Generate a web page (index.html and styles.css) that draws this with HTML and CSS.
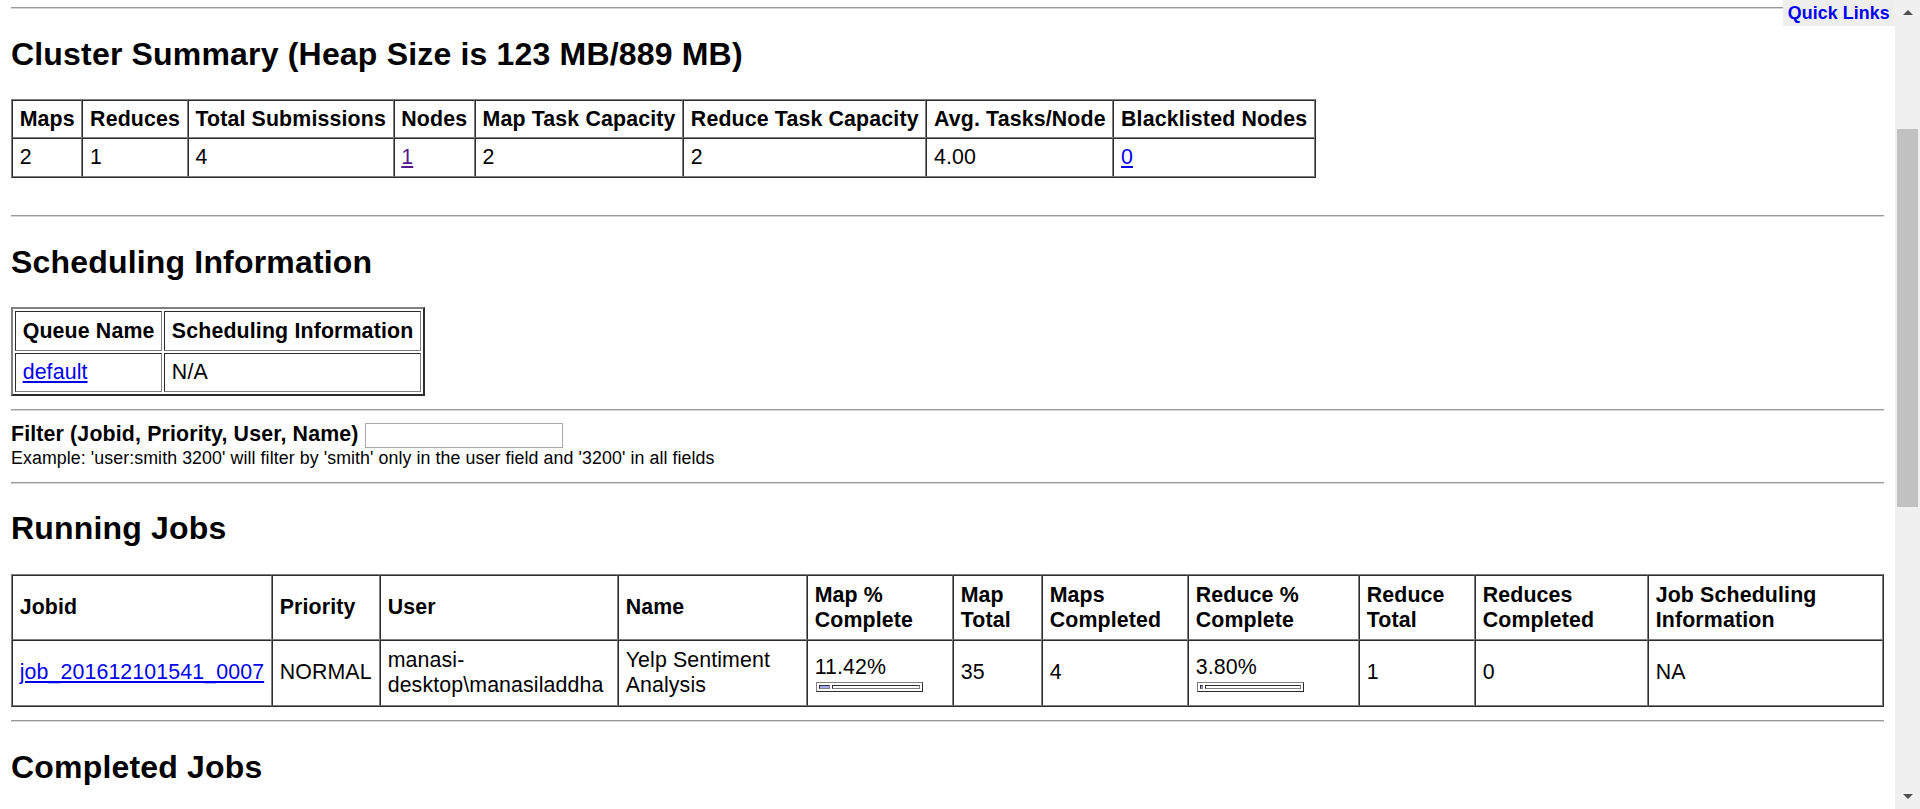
FILE: index.html
```html
<!DOCTYPE html>
<html>
<head>
<meta charset="utf-8">
<title>localhost Hadoop Map/Reduce Administration</title>
<link rel="stylesheet" href="styles.css">
</head>
<body>
<div class="viewport">
  <main class="page">
    <div class="quicklinks"><a href="#quicklinks">Quick Links</a></div>

    <hr class="first">
    <h2 id="cluster_summary">Cluster Summary (Heap Size is 123 MB/889 MB)</h2>
    <table class="grid summary">
      <tr>
        <th>Maps</th><th>Reduces</th><th>Total Submissions</th><th>Nodes</th>
        <th>Map Task Capacity</th><th>Reduce Task Capacity</th><th>Avg. Tasks/Node</th><th>Blacklisted Nodes</th>
      </tr>
      <tr>
        <td>2</td><td>1</td><td>4</td><td><a class="visited" href="#machines">1</a></td>
        <td>2</td><td>2</td><td>4.00</td><td><a href="#blacklisted">0</a></td>
      </tr>
    </table>
    <br>
    <hr>

    <h2 id="scheduling_info">Scheduling Information</h2>
    <table class="sched">
      <tr><th>Queue Name</th><th>Scheduling Information</th></tr>
      <tr><td><a href="#default">default</a></td><td>N/A</td></tr>
    </table>
    <hr>

    <form class="filter" action="#">
      <div class="filter-line"><b>Filter (Jobid, Priority, User, Name)</b> <input type="text" class="filter-input" id="filter"></div>
      <div class="small">Example: 'user:smith 3200' will filter by 'smith' only in the user field and '3200' in all fields</div>
    </form>
    <hr>

    <h2 id="running_jobs">Running Jobs</h2>
    <table class="grid jobs">
      <colgroup>
        <col class="c-jobid"><col class="c-priority"><col class="c-user"><col class="c-name">
        <col class="c-mappct"><col class="c-maptotal"><col class="c-mapsdone"><col class="c-redpct">
        <col class="c-redtotal"><col class="c-redsdone"><col class="c-sched">
      </colgroup>
      <tr>
        <th>Jobid</th><th>Priority</th><th>User</th><th>Name</th><th>Map % Complete</th>
        <th>Map Total</th><th>Maps Completed</th><th>Reduce % Complete</th><th>Reduce Total</th>
        <th>Reduces Completed</th><th>Job Scheduling Information</th>
      </tr>
      <tr>
        <td><a href="#job_201612101541_0007">job_201612101541_0007</a></td>
        <td>NORMAL</td>
        <td>manasi-desktop\manasiladdha</td>
        <td>Yelp Sentiment Analysis</td>
        <td>11.42%<div class="pbar"><span class="pbar-fill" style="width:11.42%"></span><span class="pbar-rest"></span></div></td>
        <td>35</td>
        <td>4</td>
        <td>3.80%<div class="pbar"><span class="pbar-fill" style="width:3.8%"></span><span class="pbar-rest"></span></div></td>
        <td>1</td>
        <td>0</td>
        <td>NA</td>
      </tr>
    </table>
    <hr>

    <h2 id="completed_jobs">Completed Jobs</h2>
  </main>

  <div class="scrollbar">
    <div class="sb-btn"><svg width="10" height="5" viewBox="0 0 10 5"><polygon points="0,5 5,0 10,5" fill="#505050"/></svg></div>
    <div class="sb-track"><div class="sb-thumb"></div></div>
    <div class="sb-btn"><svg width="10" height="5" viewBox="0 0 10 5"><polygon points="0,0 10,0 5,5" fill="#505050"/></svg></div>
  </div>
</div>
</body>
</html>
```

FILE: styles.css
```css
html, body {
  margin: 0;
  padding: 0;
  background: #ffffff;
}

body {
  font-family: "Liberation Sans", Arial, sans-serif;
  font-size: 21.333px;
  letter-spacing: 0.12px;
  color: #000000;
  overflow: hidden;
}

.viewport {
  display: flex;
  height: 809px;
  overflow: hidden;
}

.page {
  flex: 1 1 auto;
  min-width: 0;
  padding: 0 11px;
  position: relative;
}

hr {
  height: 0;
  margin: 10.667px 0;
  border: 0;
  border-top: 1px solid #9a9a9a;
  border-bottom: 1px solid #d6d6d6;
}

hr.first {
  margin-top: 7px;
}

h2 {
  font-size: 32px;
  font-weight: bold;
  letter-spacing: 0.18px;
  margin: 26.56px 0;
}

b,
th {
  letter-spacing: 0.15px;
}

a {
  color: #0000ee;
}

a.visited {
  color: #551a8b;
}

/* Quick links box (fixed in the original page) */
.quicklinks {
  position: absolute;
  top: 0;
  right: 0;
  background: #eeeeee;
  padding: 2.667px 5.333px;
  font-weight: bold;
  text-align: right;
}

.quicklinks a {
  display: block;
  font-size: 17.778px;
  letter-spacing: 0.1px;
  text-decoration: none;
  color: #0000ee;
}

/* Tables with border="1" cellspacing="0" */
.grid {
  border-collapse: separate;
  border-spacing: 0;
  border: 1px outset #808080;
}

.grid th,
.grid td {
  border: 1px inset #808080;
  padding: 6.667px;
  text-align: left;
}

.summary {
  margin-bottom: 2px;
}

.summary th,
.summary td {
  padding-top: 5.65px;
  padding-bottom: 5.65px;
  white-space: nowrap;
}

/* Scheduling table: border="2" cellspacing="2" */
.sched {
  border-collapse: separate;
  border-spacing: 2.667px 2px;
  border: 2px outset #808080;
  margin-bottom: 13.3px;
}

.sched th,
.sched td {
  border: 1px inset #808080;
  padding: 6.2px 6.667px;
  text-align: left;
  white-space: nowrap;
}

/* Filter */
.filter {
  margin: 0 0 12.8px 0;
}

.filter-input {
  width: 198px;
  height: 25px;
  box-sizing: border-box;
  margin: 0;
  padding: 1px 2px;
  border: 1px solid #a9a9a9;
  font-family: "Liberation Sans", Arial, sans-serif;
  font-size: 17.778px;
  vertical-align: baseline;
}

.small {
  font-size: 17.778px;
  letter-spacing: 0.09px;
}

/* Running jobs */
.jobs {
  width: 100%;
  table-layout: fixed;
  margin-bottom: 13.5px;
}

.c-jobid { width: 260px; }
.c-priority { width: 108px; }
.c-user { width: 238px; }
.c-name { width: 189px; }
.c-mappct { width: 146px; }
.c-maptotal { width: 89px; }
.c-mapsdone { width: 146px; }
.c-redpct { width: 171px; }
.c-redtotal { width: 116px; }
.c-redsdone { width: 173px; }
.c-sched { width: 235px; }

.pbar {
  display: flex;
  gap: 2px;
  width: 107px;
  height: 10px;
  box-sizing: border-box;
  margin: 1.7px 0 -1.7px 1px;
  padding: 2px;
  border: 1px outset #808080;
}

.pbar-fill {
  display: block;
  flex: 0 0 auto;
  box-sizing: border-box;
  border: 1px inset #808080;
  background: #aaaaff;
}

.pbar-rest {
  display: block;
  flex: 1 1 auto;
  box-sizing: border-box;
  border: 1px inset #808080;
  background: #ffffff;
}

/* Browser scrollbar */
.scrollbar {
  flex: 0 0 25px;
  display: flex;
  flex-direction: column;
  background: #f0f0f0;
}

.sb-btn {
  flex: 0 0 25px;
  display: flex;
  align-items: center;
  justify-content: center;
}

.sb-track {
  flex: 1 1 auto;
  padding-top: 104px;
}

.sb-thumb {
  height: 378px;
  margin: 0 2px;
  background: #c1c1c1;
}
```
